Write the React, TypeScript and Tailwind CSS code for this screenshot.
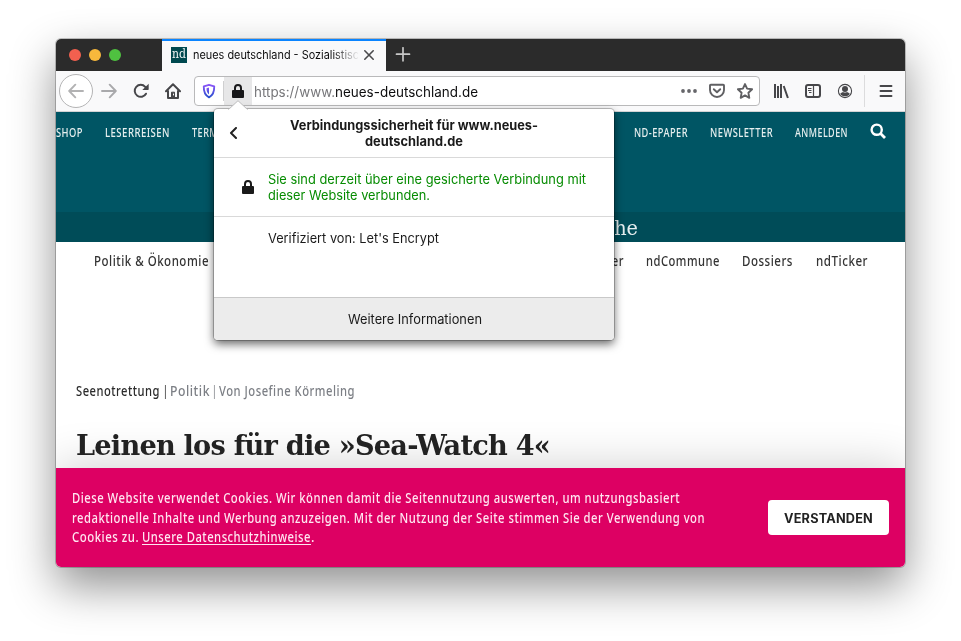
import { useLayoutEffect, useRef, useState, type ReactNode } from "react";

const UI = "font-['Inter',sans-serif]";
const SANS = "font-['Noto_Sans',sans-serif]";
const SLAB = "font-['DejaVu_Serif',serif]";

/** A single line of text, condensed or expanded to fill a given width. */
function Line({ w, className = "", children }: { w: number; className?: string; children: ReactNode }) {
  const ref = useRef<HTMLSpanElement>(null);
  const [scale, setScale] = useState(1);
  useLayoutEffect(() => {
    const fit = () => {
      if (ref.current && ref.current.offsetWidth) {
        setScale(w / parseFloat(getComputedStyle(ref.current).width));
      }
    };
    fit();
    document.fonts.ready.then(fit);
  }, [w]);
  return (
    <span className={`block shrink-0 ${className}`} style={{ width: w }}>
      <span ref={ref} className="inline-block origin-left whitespace-nowrap" style={{ transform: `scaleX(${scale})` }}>
        {children}
      </span>
    </span>
  );
}

function TabBar() {
  return (
    <div className="flex h-8 shrink-0 bg-[#2b2b2b]">
      <div className="flex w-[106px] items-center gap-2 pl-[13px]">
        <i className="size-3 rounded-full bg-[#f2604f]" />
        <i className="size-3 rounded-full bg-[#f8b83c]" />
        <i className="size-3 rounded-full bg-[#4fc140]" />
      </div>
      <div className="flex w-[224px] items-center border-t-2 border-[#0a84ff] bg-[#f9f9fa] pb-[2px] pl-[9px]">
        <div className={`flex size-4 items-center justify-center bg-[#00494f] text-[12px] leading-4 text-[#eef4f4] ${SLAB}`}>
          <Line w={14} className="-mt-[2px]">nd</Line>
        </div>
        <div className="ml-[6px] w-[166px] [mask-image:linear-gradient(to_right,black_140px,transparent_166px)]">
          <Line w={166} className={`text-[11.5px] leading-4 text-[#0c0c0d] ${UI}`}>neues deutschland - Sozialistisc</Line>
        </div>
        <svg className="ml-1 size-3" viewBox="0 0 12 12" fill="none" stroke="#4a4a4c" strokeWidth="1.6" strokeLinecap="round">
          <path d="M1.8 1.8l8.4 8.4M10.2 1.8L1.8 10.2" />
        </svg>
      </div>
      <svg className="ml-[9px] mt-2 size-4" viewBox="0 0 16 16" stroke="#c7c7c7" strokeWidth="1.7" strokeLinecap="round">
        <path d="M1.5 7.2h13M8 .8v13" />
      </svg>
    </div>
  );
}

function LockIcon({ className }: { className: string }) {
  return (
    <svg className={className} viewBox="0 0 12 14" fill="none">
      <path d="M3 7V4a3 3 0 0 1 6 0v3" stroke="currentColor" strokeWidth="2" />
      <rect x="0" y="6" width="12" height="8" rx="1" fill="currentColor" />
    </svg>
  );
}

function Toolbar() {
  return (
    <div className="flex h-[41px] shrink-0 items-center border-b border-[#d3d3d4] bg-[#f9f9fa] text-[#47474a]">
      <div className="ml-[3px] flex size-[34px] items-center justify-center rounded-full border border-[#b4b4b5] bg-white text-[#b2b2b3]">
        <svg className="size-4" viewBox="0 0 16 16" fill="none" stroke="currentColor" strokeWidth="1.9" strokeLinecap="round" strokeLinejoin="round">
          <path d="M15 8H1.5M7.3 1.7L1.2 8l6.1 6.3" />
        </svg>
      </div>
      <svg className="ml-2 size-4 text-[#a9a9ab]" viewBox="0 0 16 16" fill="none" stroke="currentColor" strokeWidth="1.9" strokeLinecap="round" strokeLinejoin="round">
        <path d="M1 8h13.5M8.7 1.7L14.8 8l-6.1 6.3" />
      </svg>
      <svg className="ml-4 size-4" viewBox="0 0 16 16" fill="none" stroke="currentColor" strokeWidth="2" strokeLinecap="round">
        <path d="M13 10.700A6 6 0 1 1 12.200 3.800L13 4.700" />
        <path d="M15.700.8v5.500a.7.700 0 0 1-.7.700H9.300z" fill="currentColor" stroke="none" />
      </svg>
      <svg className="ml-4 size-4" viewBox="0 0 16 16" fill="none" stroke="currentColor" strokeWidth="2" strokeLinecap="round" strokeLinejoin="round">
        <path d="M1 8.200L8 1.300l7 6.900M3 8v7h10V8" />
        <path d="M6.500 14.500V9.200h3v5.300z" fill="currentColor" strokeWidth="1" />
        <path d="M8.500 11v1" stroke="#fff" strokeWidth="1" />
      </svg>

      <div className="ml-[13px] flex h-[30px] w-[566px] items-center overflow-hidden rounded-[4px] border border-[#b9b9ba] bg-white">
        <svg className="ml-[6px] size-4" viewBox="0 0 16 16" fill="none">
          <defs>
            <linearGradient id="shield" x1="0" y1="0" x2="0" y2="1">
              <stop offset="0" stopColor="#8a55f7" />
              <stop offset="1" stopColor="#2a50cf" />
            </linearGradient>
          </defs>
          <path d="M8 1.800L13.200 3.300c.2 5-.6 8.700-5.200 11C3.400 12 2.600 8.300 2.800 3.300z" stroke="url(#shield)" strokeWidth="1.900" strokeLinejoin="round" />
          <path d="M8 4.600v6.800C5.800 9.700 5.500 7.800 5.500 5.300z" fill="url(#shield)" />
        </svg>
        <div className="ml-[6px] h-5 w-px bg-[#cfcfd0]" />
        <div className="flex h-full w-7 items-center justify-center bg-[#e7e7e8]">
          <LockIcon className="h-[14px] w-3 text-[#18181a]" />
        </div>
        <div className={`ml-[2px] mt-px flex text-[14px] leading-5 ${UI}`}>
          <Line w={81} className="text-[#77777a]">https://www.</Line>
          <Line w={143} className="text-[#0c0c0d]">neues-deutschland.de</Line>
        </div>
        <svg className="ml-[203px] h-1 w-4 text-[#66666a]" viewBox="0 0 16 4" fill="currentColor">
          <circle cx="2" cy="2" r="1.900" /><circle cx="8" cy="2" r="1.900" /><circle cx="14" cy="2" r="1.900" />
        </svg>
        <svg className="ml-3 size-4 text-[#606063]" viewBox="0 0 16 16" fill="none" stroke="currentColor" strokeWidth="1.900" strokeLinecap="round" strokeLinejoin="round">
          <path d="M1.800 1.800h12.400a.8.800 0 0 1 .8.800v4.400a7 7 0 0 1-14 0V2.600a.8.800 0 0 1 .8-.8z" />
          <path d="M4.800 6.200L8 9.200l3.200-3" />
        </svg>
        <svg className="ml-3 size-4 text-[#606063]" viewBox="0 0 16 16" fill="none" stroke="currentColor" strokeWidth="1.900" strokeLinejoin="round">
          <path d="M8 1.100l2.100 4.500 5 .6-3.700 3.500.9 5.100L8 12.400l-4.300 2.400.9-5.100L.9 6.200l5-.6z" />
        </svg>
      </div>

      <svg className="ml-[13px] size-4" viewBox="0 0 16 16" fill="none" stroke="currentColor" strokeWidth="2">
        <path d="M2 1v14M5 3v12M8 1v14M10.700 3l4.200 12" />
      </svg>
      <svg className="ml-4 size-4" viewBox="0 0 16 16" fill="none" stroke="currentColor">
        <rect x="1" y="2" width="14" height="12" rx="2" strokeWidth="2" />
        <path d="M8.500 2v12" strokeWidth="1.200" />
        <path d="M3 5.500h3.500M3 7.500h3.500M4 9.500h2.500" strokeWidth="1" />
      </svg>
      <svg className="ml-4 size-4" viewBox="0 0 16 16" fill="currentColor">
        <circle cx="8" cy="8" r="6.600" fill="none" stroke="currentColor" strokeWidth="1.100" />
        <circle cx="8" cy="6" r="3" />
        <path d="M3.200 10.700C4.500 9.600 5.500 9.200 6 9c1.200.8 2.800.8 4 0 .5.200 1.500.6 2.800 1.700C11.500 12.600 10 13.200 8 13.200s-3.500-.6-4.800-2.500z" />
      </svg>
      <div className="ml-[11px] h-8 w-px bg-[#dcdcdd]" />
      <svg className="ml-[13px] size-4" viewBox="0 0 16 16" stroke="currentColor" strokeWidth="1.900" strokeLinecap="round">
        <path d="M2.500 3h11M2.500 8h11M2.500 13h11" />
      </svg>
    </div>
  );
}

function SiteHeader() {
  return (
    <header className={`font-medium ${SANS}`}>
      <div className="h-[100px] bg-[#005564]">
        <div className="flex h-10 items-center pt-px text-[12px] leading-4 tracking-[0.6px] text-[#e6efef]">
          <Line w={27}>SHOP</Line>
          <Line w={65} className="ml-[22px]">LESERREISEN</Line>
          <Line w={43} className="ml-[22px]">TERMINE</Line>
          <Line w={54} className="ml-[399px]">ND-EPAPER</Line>
          <Line w={63} className="ml-[22px]">NEWSLETTER</Line>
          <Line w={53} className="ml-[22px]">ANMELDEN</Line>
          <svg className="-mt-1 ml-[22px] size-4" viewBox="0 0 16 16" fill="none" stroke="white" strokeWidth="2.400">
            <circle cx="6.700" cy="6.700" r="5.100" />
            <path d="M10.300 10.300l4.700 4.700" strokeWidth="2.800" />
          </svg>
        </div>
      </div>
      <div className={`flex h-[30px] items-center bg-[#004c58] pl-[478px] pt-[3px] text-[19.500px] font-normal leading-[27px] text-[#e6eeef] ${SLAB}`}>
        <Line w={104}>Die Woche</Line>
      </div>
      <nav className="flex h-[38px] items-center text-[13.500px] leading-5 tracking-[0.6px] text-[#333]">
        <Line w={115} className="ml-[38px]">Politik &amp; Ökonomie</Line>
        <Line w={41} className="ml-[374px]">Bücher</Line>
        <Line w={74} className="ml-[22px]">ndCommune</Line>
        <Line w={51} className="ml-[22px]">Dossiers</Line>
        <Line w={52} className="ml-[23px]">ndTicker</Line>
      </nav>
    </header>
  );
}

function Article() {
  return (
    <main className="grow pl-5 pt-[101px]">
      <div className={`flex text-[13.500px] font-medium leading-5 tracking-[0.6px] text-[#7c7f85] ${SANS}`}>
        <Line w={84} className="text-[#2a2a2a]">Seenotrettung</Line>
        <Line w={5} className="ml-[3px] text-[#222]">|</Line>
        <Line w={40} className="ml-[2px]">Politik</Line>
        <Line w={5} className="ml-[2px]">|</Line>
        <Line w={136} className="ml-[2px]">Von Josefine Körmeling</Line>
      </div>
      <h1 className={`mt-6 text-[28.500px] font-bold leading-10 tracking-[-0.8px] text-[#222] ${SLAB}`}>
        <Line w={474}>Leinen los für die »Sea-Watch 4«</Line>
      </h1>
    </main>
  );
}

function CookieBar() {
  return (
    <div className="flex h-[99px] shrink-0 items-center bg-[#dd0063] pl-4 pr-4 shadow-[0_0_48px_rgba(0,0,0,0.2)]">
      <div className={`grow pt-[2px] text-[13.500px] font-medium leading-[19.500px] tracking-[0.6px] text-[#ffe6f1] ${SANS}`}>
        <Line w={608}>Diese Website verwendet Cookies. Wir können damit die Seitennutzung auswerten, um nutzungsbasiert</Line>
        <Line w={633}>redaktionelle Inhalte und Werbung anzuzeigen. Mit der Nutzung der Seite stimmen Sie der Verwendung von</Line>
        <div className="flex">
          <Line w={67}>Cookies zu.</Line>
          <Line w={169} className="ml-[3px]">
            <span className="underline decoration-1 underline-offset-2">Unsere Datenschutzhinweise</span>
          </Line>
          <Line w={4}>.</Line>
        </div>
      </div>
      <button className={`flex h-[35px] w-[121px] items-center justify-center rounded-[4px] bg-white pr-px pt-[2px] text-[12.500px] font-bold leading-4 tracking-[0.2px] text-[#222] ${UI}`}>
        <Line w={89}>VERSTANDEN</Line>
      </button>
    </div>
  );
}

function SecurityPopup() {
  return (
    <div className={`absolute left-[214px] top-[109px] flex h-[231px] w-[400px] flex-col rounded-[4px] bg-white text-[13px] leading-4 text-[#1a1a1a] shadow-[0_0_0_1px_rgba(0,0,0,0.22),0_4px_10px_rgba(0,0,0,0.6)] ${UI}`}>
      <svg className="absolute -top-[9px] left-[14px] h-[10px] w-5" viewBox="0 0 20 10">
        <path d="M0 10L10 .7 20 10" fill="white" stroke="#bdbdbe" strokeWidth="1" />
        <path d="M.5 10h19" stroke="white" strokeWidth="1.500" />
      </svg>
      <div className="flex h-[49px] items-center border-b border-[#d9d9d9]">
        <svg className="ml-[14px] size-3" viewBox="0 0 12 12" fill="none" stroke="#222" strokeWidth="2" strokeLinecap="round" strokeLinejoin="round">
          <path d="M8 1L3 6l5 5" />
        </svg>
        <div className="ml-[50px] flex w-[248px] flex-col items-center font-bold">
          <Line w={248}>Verbindungssicherheit für www.neues-</Line>
          <Line w={98}>deutschland.de</Line>
        </div>
      </div>
      <div className="flex h-[59px] items-center border-b border-[#d9d9d9]">
        <LockIcon className="ml-7 h-[14px] w-3" />
        <div className="ml-[14px] text-[#058b00]">
          <Line w={318}>Sie sind derzeit über eine gesicherte Verbindung mit</Line>
          <Line w={162}>dieser Website verbunden.</Line>
        </div>
      </div>
      <div className="grow pl-[54px] pt-[13px]">
        <Line w={171}>Verifiziert von: Let's Encrypt</Line>
      </div>
      <div className="flex h-[43px] items-center justify-center rounded-b-[4px] border-t border-[#c9c9c9] bg-[#ececec] pl-[2px]">
        <Line w={134}>Weitere Informationen</Line>
      </div>
    </div>
  );
}

export default function App() {
  return (
    <div className="relative h-[641px] w-[961px] overflow-hidden bg-white pl-14 pt-[39px]">
      <div className="h-[528px] w-[849px] rounded-[5px] shadow-[0_0_0_1px_rgba(0,0,0,0.22),0_19px_45px_rgba(0,0,0,0.44)]">
        <div className="flex h-full flex-col overflow-hidden rounded-[5px] bg-white">
          <TabBar />
          <Toolbar />
          <SiteHeader />
          <Article />
          <CookieBar />
        </div>
      </div>
      <SecurityPopup />
    </div>
  );
}
